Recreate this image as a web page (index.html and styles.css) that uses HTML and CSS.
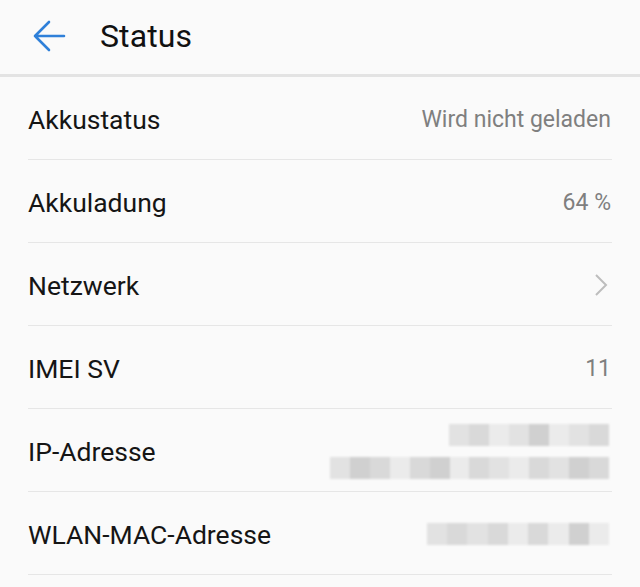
FILE: index.html
```html
<!DOCTYPE html>
<html lang="de">
<head>
<meta charset="utf-8">
<title>Status</title>
<link rel="stylesheet" href="styles.css">
</head>
<body>
<header class="bar">
  <svg class="back" width="34" height="34" viewBox="0 0 34 34" aria-hidden="true">
    <path d="M32 17H3M17 3L3 17L17 31" fill="none" stroke="#2f80d9" stroke-width="2.6" stroke-linecap="round" stroke-linejoin="round"/>
  </svg>
  <h1 class="title">Status</h1>
</header>
<ul class="list">
  <li class="row"><span class="label">Akkustatus</span><span class="value">Wird nicht geladen</span></li>
  <li class="row"><span class="label">Akkuladung</span><span class="value">64 %</span></li>
  <li class="row"><span class="label">Netzwerk</span>
    <svg class="chev" width="14" height="24" viewBox="0 0 14 24" aria-hidden="true"><path d="M2 2L12 12L2 22" fill="none" stroke="#bdbdbd" stroke-width="2"/></svg>
  </li>
  <li class="row"><span class="label">IMEI SV</span><span class="value">11</span></li>
  <li class="row"><span class="label">IP-Adresse</span>
    <div class="blurs">
      <div class="blur w160">
        <i class="c1"></i><i class="c2"></i><i class="c0"></i><i class="c1"></i><i class="c3"></i><i class="c0"></i><i class="c1"></i><i class="c2"></i>
      </div>
      <div class="blur w280">
        <i class="c1"></i><i class="c3"></i><i class="c2"></i><i class="c0"></i><i class="c2"></i><i class="c3"></i><i class="c0"></i><i class="c2"></i><i class="c1"></i><i class="c0"></i><i class="c2"></i><i class="c1"></i><i class="c3"></i><i class="c2"></i>
      </div>
    </div>
  </li>
  <li class="row"><span class="label">WLAN-MAC-Adresse</span>
    <div class="blurs">
      <div class="blur w182">
        <i class="c1"></i><i class="c2"></i><i class="c1"></i><i class="c2"></i><i class="c0"></i><i class="c2"></i><i class="c0"></i><i class="c3"></i><i class="c0"></i>
      </div>
    </div>
  </li>
</ul>
</body>
</html>
```
FILE: styles.css
```css
* { box-sizing: border-box; }
html, body { margin: 0; padding: 0; }
body {
  background: #fafafa;
  font-family: Roboto, "Noto Sans", "Liberation Sans", sans-serif;
  color: #141414;
  width: 640px;
  height: 587px;
  overflow: hidden;
}
.bar {
  height: 77px;
  display: flex;
  align-items: center;
  padding-left: 32px;
  border-bottom: 3px solid #e3e3e3;
  padding-bottom: 2px;
}
.back { display: block; margin-top: 0; }
.title {
  margin: 0 0 0 34px;
  font-size: 32px;
  font-weight: 400;
  color: #111;
  letter-spacing: 0.1px;
}
.list {
  list-style: none;
  margin: 0;
  padding: 0 28px;
}
.row {
  height: 83px;
  display: flex;
  align-items: center;
  justify-content: space-between;
  border-bottom: 1px solid #e6e6e6;
  padding-top: 2px;
}
.label {
  font-size: 26.5px;
  color: #151515;
}
.value {
  font-size: 23px;
  color: #7f7f7f;
  margin-right: 1px;
}
.chev { margin-right: 4px; }
.blurs {
  display: flex;
  flex-direction: column;
  align-items: flex-end;
  gap: 11px;
  margin-right: 3px;
}
.blur {
  display: flex;
  height: 22px;
  filter: blur(0.8px);
}
.blur i { flex: 1; display: block; }
.w160 { width: 160px; }
.w280 { width: 279px; }
.w182 { width: 182px; }
.c0 { background: #ebebeb; }
.c1 { background: #e2e2e2; }
.c2 { background: #d9d9d9; }
.c3 { background: #d0d0d0; }
```
